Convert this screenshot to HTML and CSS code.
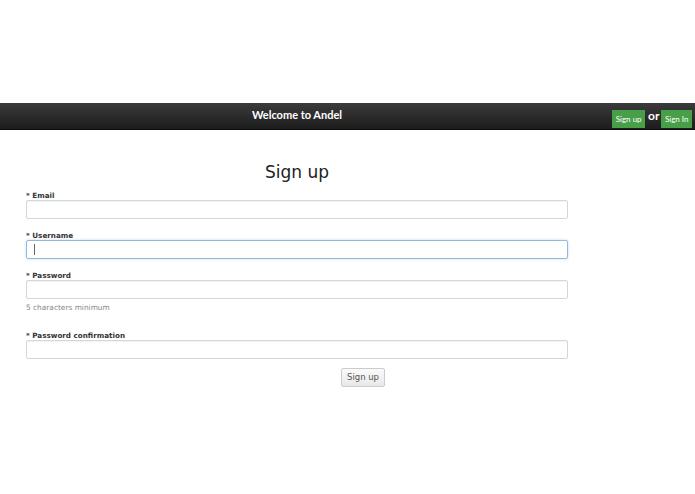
FILE: index.html
```html
<!DOCTYPE html>
<html>
<head>
<meta charset="utf-8">
<link rel="stylesheet" href="styles.css">
</head>
<body>
<div class="top-space"></div>
<header class="navbar">
  <div class="brand">Welcome to Andel</div>
  <div class="auth">
    <a class="btn-green">Sign up</a>
    <span class="or">or</span>
    <a class="btn-green">Sign In</a>
  </div>
</header>
<main class="container">
  <h2 class="title">Sign up</h2>
  <form class="form">
    <div class="field">
      <label>* Email</label>
      <input type="text">
    </div>
    <div class="field">
      <label>* Username</label>
      <div class="input focus"><span class="caret"></span></div>
    </div>
    <div class="field">
      <label>* Password</label>
      <input type="password">
      <p class="hint">5 characters minimum</p>
    </div>
    <div class="field">
      <label>* Password confirmation</label>
      <input type="password">
    </div>
    <div class="actions">
      <button type="button" class="btn">Sign up</button>
    </div>
  </form>
</main>
</body>
</html>
```
FILE: styles.css
```css
html, body {
  margin: 0;
  padding: 0;
  background: #fff;
}
body {
  font-family: "DejaVu Sans", Verdana, sans-serif;
  color: #333;
}
.top-space {
  height: 103px;
}
.navbar {
  height: 26px;
  background: linear-gradient(#3b3b3b, #1c1c1c);
  border-bottom: 1px solid #0e0e0e;
  display: flex;
  align-items: center;
}
.brand {
  width: 542px;
  margin-left: 26px;
  text-align: center;
  font-family: Lato, sans-serif;
  font-weight: bold;
  font-size: 11px;
  color: #fff;
  margin-top: -4px;
}
.auth {
  margin-left: auto;
  margin-right: 3px;
  display: flex;
  align-items: center;
  gap: 1px;
  margin-top: 5px;
}
.btn-green {
  display: inline-block;
  background: #47a047;
  color: #fff;
  font-family: Lato, sans-serif;
  font-size: 8px;
  line-height: 18px;
  padding: 0 3.5px;
}
.or {
  color: #fff;
  font-family: Lato, sans-serif;
  font-weight: bold;
  font-size: 12px;
  margin: -6px 1px 0 2px;
}
.container {
  width: 542px;
  margin-left: 26px;
}
.title {
  text-align: center;
  font-weight: normal;
  font-size: 17px;
  color: #222;
  margin: 31px 0 8px;
  line-height: 22px;
}
.field {
  display: flex;
  flex-direction: column;
  margin-bottom: 12px;
}
.field label {
  font-size: 7.2px;
  font-weight: bold;
  color: #333;
  line-height: 9px;
}
.field input, .field .input {
  box-sizing: border-box;
  width: 542px;
  height: 19px;
  border: 1px solid #d6d6d6;
  border-radius: 2px;
  margin: 0;
  padding: 0 5px;
  background: #fff;
  box-shadow: inset 0 1px 1px rgba(0,0,0,0.05);
}
.field .input.focus {
  border-color: #92b8dc;
  box-shadow: 0 0 3px rgba(100,150,220,0.35);
  display: flex;
  align-items: center;
}
.caret {
  display: block;
  width: 1px;
  height: 11px;
  background: #666;
  margin-left: 2px;
}
.hint {
  margin: 4px 0 7px;
  font-size: 7.4px;
  color: #888;
  line-height: 9px;
}
.actions {
  margin-top: -6px;
  padding-left: 315px;
}
.btn {
  font-family: "DejaVu Sans", Verdana, sans-serif;
  font-size: 8.5px;
  color: #555;
  width: 44px;
  height: 19px;
  border: 1px solid #ccc;
  border-radius: 2px;
  background: linear-gradient(#fbfbfb, #e8e8e8);
  padding: 0;
}
```
